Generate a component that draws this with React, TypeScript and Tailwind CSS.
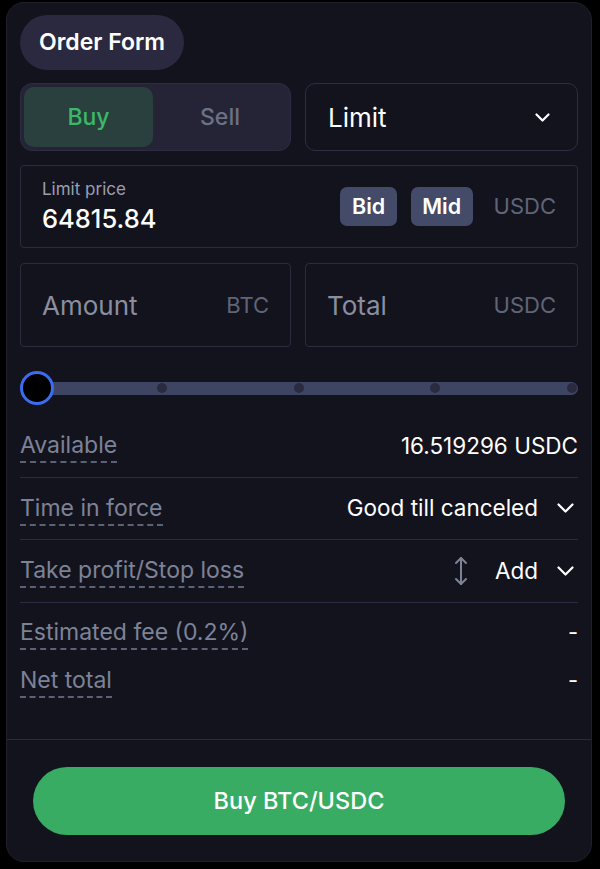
import React from 'react';

const font = { fontFamily: 'Inter, "Noto Sans", sans-serif' };

function Chevron({ w = 17, h = 10, className = '' }: { w?: number; h?: number; className?: string }) {
  return (
    <svg
      width={w}
      height={h}
      viewBox={`0 0 ${w} ${h}`}
      fill="none"
      stroke="white"
      strokeWidth="2.2"
      strokeLinecap="round"
      strokeLinejoin="round"
      className={className}
    >
      <path d={`M1.5 1.5L${w / 2} ${h - 1.5}L${w - 1.5} 1.5`} />
    </svg>
  );
}

const labelCls =
  'text-[23px] leading-none text-[#7d8397] pb-[4px] border-b-2 border-dashed border-[#5c6275] translate-y-[3px]';

function InfoRow({ label, children }: { label: string; children?: React.ReactNode }) {
  return (
    <div className="flex items-center justify-between h-[62.5px] border-b border-[#2a2a40]">
      <span className={labelCls}>{label}</span>
      <div className="flex items-center text-[22.5px] text-white pr-[4px]">{children}</div>
    </div>
  );
}

export default function App() {
  return (
    <div className="w-[600px] h-[869px] bg-black pl-[6px] pt-[2px]" style={font}>
      <div className="w-[586px] h-[860px] rounded-[18px] bg-[#13131e] border border-[#1f1f2e] flex flex-col">
        <div className="px-[13px] pt-[12px] flex flex-col">
          {/* header pill */}
          <div className="self-start h-[55px] px-[19px] rounded-full bg-[#2a2940] flex items-center">
            <span className="text-[23px] font-semibold text-white">Order Form</span>
          </div>

          {/* side + type */}
          <div className="mt-[13px] flex gap-[14px]">
            <div className="w-[271px] h-[68px] rounded-[12px] bg-[#242436] border border-[#2c2c42] p-[3px] flex">
              <div className="w-[129px] rounded-[10px] bg-[#2a403f] flex items-center justify-center">
                <span className="text-[23px] font-medium text-[#3cb967]">Buy</span>
              </div>
              <div className="flex-1 flex items-center justify-center">
                <span className="text-[23px] font-medium text-[#6c7184]">Sell</span>
              </div>
            </div>
            <div className="flex-1 h-[68px] rounded-[10px] border border-[#2d2c45] flex items-center justify-between pl-[22px] pr-[27px]">
              <span className="text-[26px] text-white">Limit</span>
              <Chevron w={15} h={9} />
            </div>
          </div>

          {/* limit price */}
          <div className="mt-[14px] h-[83px] rounded-[4px] border border-[#2b2b40] flex items-center justify-between pl-[21px] pr-[21px]">
            <div className="flex flex-col">
              <span className="text-[17px] text-[#9a9fb0] leading-[23px]">Limit price</span>
              <span className="text-[25.5px] font-medium text-white leading-[35px]">64815.84</span>
            </div>
            <div className="flex items-center">
              <span className="h-[39px] px-[11.5px] rounded-[7px] bg-[#434b68] flex items-center text-[21.5px] font-semibold text-white">
                Bid
              </span>
              <span className="ml-[14px] h-[39px] px-[11.5px] rounded-[7px] bg-[#434b68] flex items-center text-[21.5px] font-semibold text-white">
                Mid
              </span>
              <span className="ml-[21px] text-[22px] text-[#5f6577]">USDC</span>
            </div>
          </div>

          {/* amount / total */}
          <div className="mt-[15px] flex gap-[14px]">
            <div className="w-[271px] h-[84px] rounded-[4px] border border-[#2b2b40] flex items-center justify-between pl-[21px] pr-[21px]">
              <span className="text-[26px] text-[#8a8fa0]">Amount</span>
              <span className="text-[22px] text-[#5f6577]">BTC</span>
            </div>
            <div className="flex-1 h-[84px] rounded-[4px] border border-[#2b2b40] flex items-center justify-between pl-[21px] pr-[21px]">
              <span className="text-[26px] text-[#8a8fa0]">Total</span>
              <span className="text-[22px] text-[#5f6577]">USDC</span>
            </div>
          </div>

          {/* slider */}
          <div className="mt-[24px] h-[34px] relative flex items-center">
            <div className="w-full h-[13px] rounded-full bg-[#3e4563] flex items-center justify-between pl-[137px] pr-[1px]">
              <span className="w-[10px] h-[10px] rounded-full bg-[#2a2a40]" />
              <span className="w-[10px] h-[10px] rounded-full bg-[#2a2a40]" />
              <span className="w-[10px] h-[10px] rounded-full bg-[#2a2a40]" />
              <span className="w-[10px] h-[10px] rounded-full bg-[#2a2a40]" />
            </div>
            <span className="absolute left-0 top-0 w-[34px] h-[34px] rounded-full bg-black border-[3px] border-[#3a6df0]" />
          </div>

          {/* info rows */}
          <div className="mt-[10px] flex flex-col">
            <InfoRow label="Available">
              <span className="-mr-[4px]">16.519296 USDC</span>
            </InfoRow>
            <InfoRow label="Time in force">
              <span>Good till canceled</span>
              <Chevron className="ml-[19px]" />
            </InfoRow>
            <InfoRow label="Take profit/Stop loss">
              <svg width="14" height="30" viewBox="0 0 14 30" fill="none" stroke="#7d8397" strokeWidth="2" strokeLinecap="round" strokeLinejoin="round">
                <path d="M7 2v26" />
                <path d="M2 7l5-5 5 5" />
                <path d="M2 23l5 5 5-5" />
              </svg>
              <span className="ml-[27px]">Add</span>
              <Chevron className="ml-[19px]" />
            </InfoRow>
            <div className="flex items-center justify-between h-[60px]">
              <span className={labelCls}>Estimated fee (0.2%)</span>
              <span className="text-[22px] text-white">-</span>
            </div>
            <div className="flex items-center justify-between h-[36px]">
              <span className={labelCls}>Net total</span>
              <span className="text-[22px] text-white">-</span>
            </div>
          </div>
        </div>

        <div className="mt-auto border-t border-[#2a2a40] pt-[27px] pb-[26px] px-[26px]">
          <button className="w-full h-[68px] rounded-full bg-[#38ac63] flex items-center justify-center">
            <span className="text-[23.5px] font-medium text-white">Buy BTC/USDC</span>
          </button>
        </div>
      </div>
    </div>
  );
}
